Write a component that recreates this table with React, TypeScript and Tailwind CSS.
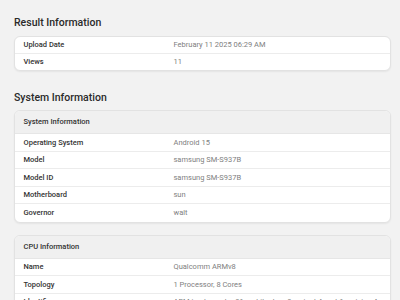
import React from "react";

type Row = [string, string];

function Rows({ rows, h }: { rows: Row[]; h: string }) {
  return (
    <>
      {rows.map(([k, v], i) => (
        <div
          key={k}
          className={`flex items-center ${h} ${i < rows.length - 1 ? "border-b border-[#ececec]" : ""}`}
        >
          <div className="w-[40%] pl-[8.5px] text-[7.5px] font-medium text-[#333333] whitespace-nowrap">
            {k}
          </div>
          <div className="flex-1 pl-[8.5px] text-[7.5px] text-[#808080] whitespace-nowrap overflow-hidden">
            {v}
          </div>
        </div>
      ))}
    </>
  );
}

function Card({ title, rows, className = "" }: { title?: string; rows: Row[]; className?: string }) {
  return (
    <div
      className={`w-[377px] rounded-[6px] border border-[#e2e2e2] bg-white shadow-[0_1px_2px_rgba(0,0,0,0.06)] overflow-hidden ${className}`}
    >
      {title && (
        <div className="h-[23px] flex items-center pl-[8.5px] bg-[#f0f0f0] border-b border-[#e6e6e6] text-[7.5px] font-medium text-[#333333]">
          {title}
        </div>
      )}
      <Rows rows={rows} h={title ? "h-[17.5px]" : "h-[16.5px]"} />
    </div>
  );
}

export default function App() {
  return (
    <div
      className="w-[400px] h-[300px] overflow-hidden bg-[#f2f2f2] pl-[14px]"
      style={{ fontFamily: "Roboto, 'Noto Sans', sans-serif" }}
    >
      <h2 className="pt-[16px] mb-[6px] h-[30px] leading-[14px] text-[10.5px] font-medium text-[#2a2a2a]">
        Result Information
      </h2>
      <Card
        rows={[
          ["Upload Date", "February 11 2025 06:29 AM"],
          ["Views", "11"],
        ]}
      />
      <h2 className="mt-[20px] mb-[5px] h-[14px] leading-[14px] text-[10.5px] font-medium text-[#2a2a2a]">
        System Information
      </h2>
      <Card
        title="System Information"
        rows={[
          ["Operating System", "Android 15"],
          ["Model", "samsung SM-S937B"],
          ["Model ID", "samsung SM-S937B"],
          ["Motherboard", "sun"],
          ["Governor", "walt"],
        ]}
      />
      <Card
        className="mt-[12px]"
        title="CPU Information"
        rows={[
          ["Name", "Qualcomm ARMv8"],
          ["Topology", "1 Processor, 8 Cores"],
          ["Identifier", "ARM implementer 81 architecture 8 variant 4 part 1 revision 4"],
          ["Cluster 1", "2 Cores @ 4.47 GHz"],
        ]}
      />
    </div>
  );
}
